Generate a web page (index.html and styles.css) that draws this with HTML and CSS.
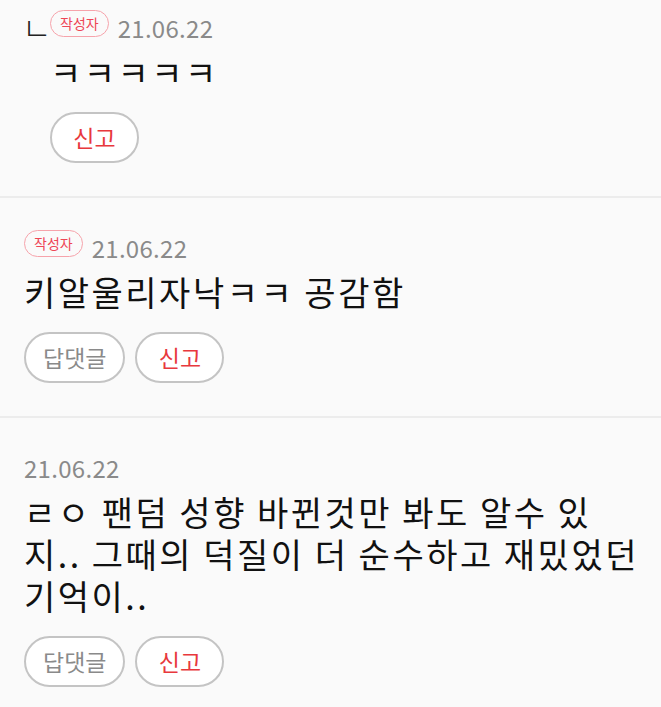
FILE: index.html
```html
<!DOCTYPE html>
<html>

<head>
  <meta charset="utf-8">
  <title>댓글</title>
  <link rel="stylesheet" href="styles.css">
</head>

<body>

  <!-- Comment list (scrolled a little, so the first reply starts near the top) -->
  <div class="comment-list">

    <!-- Reply by the author -->
    <div class="comment reply">
      <span class="reply-mark">ㄴ</span>
      <div class="comment-body">
        <div class="comment-head">
          <span class="badge">작성자</span>
          <span class="date">21.06.22</span>
        </div>
        <p class="comment-text">ㅋㅋㅋㅋㅋ</p>
        <div class="comment-actions">
          <button class="pill report">신고</button>
        </div>
      </div>
    </div>

    <div class="comment">
      <div class="comment-body">
        <div class="comment-head">
          <span class="badge">작성자</span>
          <span class="date">21.06.22</span>
        </div>
        <p class="comment-text">키알울리자낙ㅋㅋ 공감함</p>
        <div class="comment-actions">
          <button class="pill">답댓글</button>
          <button class="pill report">신고</button>
        </div>
      </div>
    </div>

    <div class="comment">
      <div class="comment-body">
        <div class="comment-head">
          <span class="date">21.06.22</span>
        </div>
        <p class="comment-text">ㄹㅇ 팬덤 성향 바뀐것만 봐도 알수 있지.. 그때의 덕질이 더 순수하고 재밌었던 기억이..</p>
        <div class="comment-actions">
          <button class="pill">답댓글</button>
          <button class="pill report">신고</button>
        </div>
      </div>
    </div>

  </div>

</body>

</html>
```

FILE: styles.css
```css
body {
  margin: 0;
  padding: 0;
  font-family: 'Noto Sans CJK KR', 'Noto Sans', sans-serif;
  background-color: #fafafa;
  color: #111;
  overflow: hidden;
}

.comment-list {
  margin-top: -22px;
}

.comment {
  display: flex;
  padding: 32px 20px 33px 24px;
  border-bottom: 2px solid #ececec;
}

.comment-body {
  flex: 1;
  min-width: 0;
}

/* little "ㄴ" in front of a reply */
.reply-mark {
  width: 26px;
  height: 27px;
  margin-left: -2px;
  margin-right: 2px;
  font-size: 32px;
  font-weight: 300;
  line-height: 33px;
  color: #222;
}

.comment-head {
  display: flex;
  align-items: flex-end;
  gap: 9px;
  min-height: 27px;
}

.badge {
  height: 25px;
  padding: 0 9px;
  border: 1px solid #f6a3ab;
  border-radius: 14px;
  font-size: 14px;
  line-height: 25px;
  color: #ee4656;
}

.date {
  font-size: 24px;
  line-height: 24px;
  letter-spacing: 0.3px;
  color: #8a8a8a;
  margin-bottom: -3px;
}

.comment-text {
  margin: 14px 0 0;
  font-size: 34px;
  line-height: 42px;
  letter-spacing: 2.5px;
}

.comment-actions {
  display: flex;
  gap: 10px;
  margin-top: 19px;
}

.pill {
  min-width: 89px;
  height: 51px;
  padding: 0 17px;
  border: 2px solid #c4c4c4;
  border-radius: 26px;
  background-color: #fff;
  font-family: inherit;
  font-size: 23px;
  line-height: 47px;
  color: #8a8a8a;
  cursor: pointer;
}

.pill.report {
  color: #e8383d;
}
```
